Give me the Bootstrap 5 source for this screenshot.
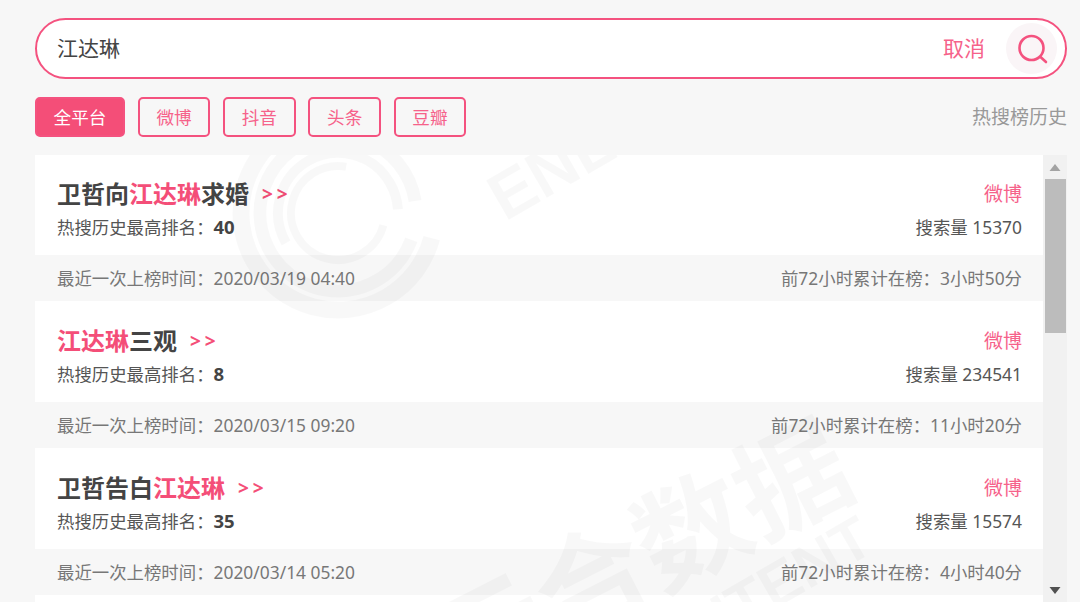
<!DOCTYPE html>
<html lang="zh-CN">
<head>
  <meta charset="UTF-8">
  <title>热搜榜搜索</title>
  <link rel="stylesheet" href="https://cdn.jsdelivr.net/npm/bootstrap@5.3.0/dist/css/bootstrap.min.css">
  <style>
    html, body { height: 602px; overflow: hidden; }
    body {
      background: #f7f7f7;
      color: #444;
      font-family: "Noto Sans", "Noto Sans CJK SC", sans-serif;
      padding: 18px 13px 0 35px;
    }
    .search-box {
      height: 61px;
      background: #fff;
      border: 2px solid #f4527f;
      border-radius: 31px;
      padding: 0 8px 0 20px;
    }
    .search-box input {
      border: 0;
      outline: 0;
      padding: 0;
      font: inherit;
      font-size: 21px;
      color: #444;
      background: transparent;
    }
    .cancel-link { color: #f6628a; font-size: 21px; margin-right: 21px; text-decoration: none; }
    .search-btn {
      width: 51px;
      height: 51px;
      background: #faf5f7;
    }
    .tag-row { margin-top: 18px; height: 40px; }
    .tag-btn {
      --bs-btn-padding-x: 0;
      --bs-btn-padding-y: 0;
      width: 72.500px;
      height: 40px;
      line-height: 36px;
      font-size: 17.600px;
      color: #f6628a;
      background: transparent;
      border: 2px solid #f4527f;
      border-radius: 5px;
    }
    .tag-btn.is-on { width: 90px; background: #f44e78; color: #fff; }
    .tag-gap { gap: 12.800px; }
    .history-link { color: #999; font-size: 19px; text-decoration: none; }
    .panel { margin-top: 18px; height: 447px; }
    .hot-list { background: #fff; overflow: hidden; }
    .hot-top { height: 101px; padding: 25px 21px 0 22px; }
    #hotRows .hot-top:first-child { height: 100px; padding-top: 24px; }
    .hot-title { font-size: 24px; line-height: 30px; font-weight: 700; color: #444; }
    .pink { color: #f44e78; }
    .more-mark { font-size: 19px; font-weight: 700; color: #f44e78; letter-spacing: 4px; margin-left: 13px; position: relative; top: -2px; }
    .source { font-size: 19px; line-height: 30px; color: #f6628a; }
    .hot-sub { font-size: 17.400px; line-height: 24px; margin-top: 4px; color: #555; }
    .hot-sub b { color: #444; font-size: 18.500px; }
    .hot-foot {
      height: 46px;
      padding: 0 21px 0 22px;
      background: #f7f7f7;
      font-size: 17.400px;
      color: #777;
    }
    .fake-scroll { width: 24px; background: #f1f1f1; }
    .scroll-btn { height: 24px; }
    .scroll-thumb { height: 154px; margin: 0 1.500px; background: #bcbcbc; }
    .watermark { top: 0; left: 0; pointer-events: none; }
    .watermark text { font-family: "Liberation Sans", "Noto Sans CJK SC", sans-serif; font-weight: 700; fill: #000; fill-opacity: .028; }
    .watermark circle { fill: none; stroke: #000; stroke-opacity: .028; }
  </style>
</head>
<body>
  <div class="search-box d-flex align-items-center">
    <input class="flex-grow-1" type="text" value="江达琳">
    <a class="cancel-link" href="#">取消</a>
    <div class="search-btn rounded-circle d-flex align-items-center justify-content-center">
      <svg width="32" height="32" viewBox="0 0 32 32" fill="none" stroke="#f4527f" stroke-width="2.600" stroke-linecap="round">
        <circle cx="15.500" cy="15" r="12"/>
        <path d="M24.500 24l5.500 5"/>
      </svg>
    </div>
  </div>

  <div class="tag-row d-flex justify-content-between align-items-center">
    <div class="d-flex tag-gap">
      <button class="btn tag-btn is-on">全平台</button>
      <button class="btn tag-btn">微博</button>
      <button class="btn tag-btn">抖音</button>
      <button class="btn tag-btn">头条</button>
      <button class="btn tag-btn">豆瓣</button>
    </div>
    <a class="history-link" href="#">热搜榜历史</a>
  </div>

  <div class="panel d-flex">
    <div class="hot-list flex-grow-1 position-relative">
      <div id="hotRows"></div>
      <!-- watermark lies over the rows -->
      <svg class="watermark position-absolute" width="1008" height="447" viewBox="0 0 1008 447">
        <g transform="translate(303 58)">
          <circle r="97" stroke-width="17" stroke-dasharray="508 101" transform="rotate(15)"/>
          <circle r="78" stroke-width="13" stroke-dasharray="340 20 90 40" transform="rotate(20)"/>
          <circle r="60" stroke-width="10" stroke-dasharray="216 174" transform="rotate(150)"/>
          <circle r="47" stroke-width="8" stroke-dasharray="217 78" transform="rotate(15)"/>
        </g>
        <text transform="translate(470 67) rotate(-30)" font-size="66">ENLIGHTENT</text>
        <text transform="translate(825 336) rotate(-27)" font-size="112" text-anchor="end">云合数据</text>
        <text transform="translate(842 395) rotate(-30)" font-size="60" text-anchor="end">ENLIGHTENT</text>
      </svg>
    </div>
    <div class="fake-scroll d-flex flex-column">
      <div class="scroll-btn d-flex align-items-center justify-content-center">
        <svg width="12" height="7" viewBox="0 0 12 7"><path d="M6 0l5.500 7H.5z" fill="#a3a3a3"/></svg>
      </div>
      <div class="scroll-thumb"></div>
      <div class="flex-grow-1"></div>
      <div class="scroll-btn d-flex align-items-center justify-content-center">
        <svg width="12" height="7" viewBox="0 0 12 7"><path d="M.5 0h11L6 7z" fill="#505050"/></svg>
      </div>
    </div>
  </div>

  <script>
    const rows = [
      { title: '卫哲向<span class="pink">江达琳</span>求婚', rank: 40, count: 15370, last: '2020/03/19 04:40', total: '3小时50分' },
      { title: '<span class="pink">江达琳</span>三观', rank: 8, count: 234541, last: '2020/03/15 09:20', total: '11小时20分' },
      { title: '卫哲告白<span class="pink">江达琳</span>', rank: 35, count: 15574, last: '2020/03/14 05:20', total: '4小时40分' }
    ];
    document.getElementById("hotRows").innerHTML = rows.map(r => `
      <div class="hot-top">
        <div class="d-flex justify-content-between">
          <div class="hot-title">${r.title}<span class="more-mark">&gt;&gt;</span></div>
          <div class="source">微博</div>
        </div>
        <div class="hot-sub d-flex justify-content-between">
          <div>热搜历史最高排名：<b>${r.rank}</b></div>
          <div>搜索量 ${r.count}</div>
        </div>
      </div>
      <div class="hot-foot d-flex justify-content-between align-items-center">
        <div>最近一次上榜时间：${r.last}</div>
        <div>前72小时累计在榜：${r.total}</div>
      </div>`).join("");
  </script>
  <script src="https://cdn.jsdelivr.net/npm/bootstrap@5.3.0/dist/js/bootstrap.bundle.min.js"></script>
</body>
</html>
